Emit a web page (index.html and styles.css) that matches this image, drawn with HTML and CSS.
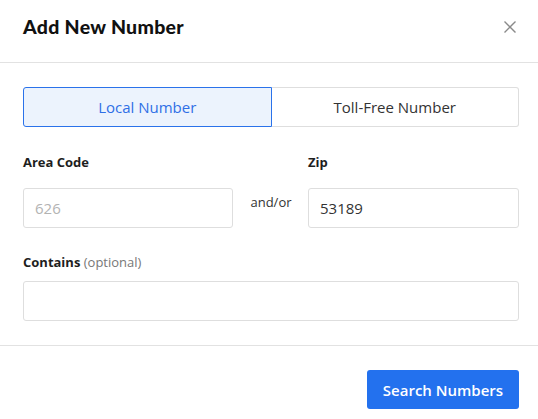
FILE: index.html
```html
<!DOCTYPE html>
<html lang="en">
<head>
<meta charset="utf-8">
<title>Add New Number</title>
<link rel="stylesheet" href="styles.css">
</head>
<body>
<div class="modal">
  <div class="modal-header">
    <h2 class="modal-title">Add New Number</h2>
    <button class="close-btn" aria-label="Close">
      <svg width="12" height="12" viewBox="0 0 12 12"><path d="M0.5 0.5L11.5 11.5M11.5 0.5L0.5 11.5" stroke="#8a8a8a" stroke-width="1.4" fill="none"/></svg>
    </button>
  </div>
  <div class="modal-body">
    <div class="toggle">
      <button class="toggle-btn active">Local Number</button>
      <button class="toggle-btn">Toll-Free Number</button>
    </div>
    <div class="row">
      <div class="field area">
        <label class="label">Area Code</label>
        <input class="input" type="text" placeholder="626">
      </div>
      <div class="andor">and/or</div>
      <div class="field zip">
        <label class="label">Zip</label>
        <input class="input" type="text" value="53189">
      </div>
    </div>
    <div class="field contains">
      <label class="label">Contains <span class="optional">(optional)</span></label>
      <input class="input" type="text">
    </div>
  </div>
  <div class="modal-footer">
    <button class="primary-btn">Search Numbers</button>
  </div>
</div>
</body>
</html>
```
FILE: styles.css
```css
* { box-sizing: border-box; }
html, body { margin: 0; padding: 0; background: #fff; }
body {
  font-family: "Open Sans", "Noto Sans", sans-serif;
  color: #222;
}
.modal { width: 538px; }
.modal-header {
  height: 63px;
  display: flex;
  align-items: flex-start;
  justify-content: space-between;
  padding: 15px 22px 0 23px;
  border-bottom: 1px solid #e2e2e2;
}
.modal-title {
  margin: 0;
  font-family: "Lato", sans-serif;
  font-weight: 900;
  font-size: 19.5px;
  line-height: 1.2;
  color: #111;
  letter-spacing: 0.3px;
}
.close-btn {
  background: none;
  border: 0;
  padding: 0;
  width: 12px;
  height: 12px;
  display: flex;
  margin-top: 6px;
}
.modal-body { padding: 24px 19px 24px 23px; }
.toggle { display: flex; height: 40px; }
.toggle-btn {
  flex: 1;
  font-family: inherit;
  font-size: 15px;
  color: #333;
  background: #fff;
  border: 1px solid #dedede;
  border-left: 0;
  border-radius: 0 3px 3px 0;
  cursor: pointer;
}
.toggle-btn.active {
  color: #2f6fe6;
  background: #ecf3fd;
  border: 1px solid #2a72ea;
  border-radius: 3px 0 0 3px;
}
.row { display: flex; margin-top: 26px; }
.field { display: flex; flex-direction: column; }
.area { width: 210px; }
.zip { flex: 1; }
.andor {
  width: 75px;
  text-align: center;
  font-size: 13px;
  color: #333;
  padding-top: 40px;
  padding-left: 1px;
}
.label {
  font-size: 13px;
  font-weight: 700;
  line-height: 18px;
  color: #1e1e1e;
  margin-bottom: 17px;
}
.optional { font-weight: 400; color: #777; }
.input {
  height: 40px;
  border: 1px solid #dedede;
  border-radius: 3px;
  padding: 0 11px;
  font-family: inherit;
  font-size: 15px;
  color: #333;
  outline: none;
  width: 100%;
}
.input::placeholder { color: #b3b3b3; }
.contains { margin-top: 25px; }
.contains .label { margin-bottom: 10px; }
.modal-footer {
  border-top: 1px solid #e2e2e2;
  padding: 24px 19px 10px 23px;
  display: flex;
  justify-content: flex-end;
}
.primary-btn {
  width: 152px;
  height: 39px;
  background: #2371ee;
  color: #fff;
  border: 0;
  border-radius: 3px;
  font-family: inherit;
  font-size: 15px;
  font-weight: 600;
  cursor: pointer;
}
```
